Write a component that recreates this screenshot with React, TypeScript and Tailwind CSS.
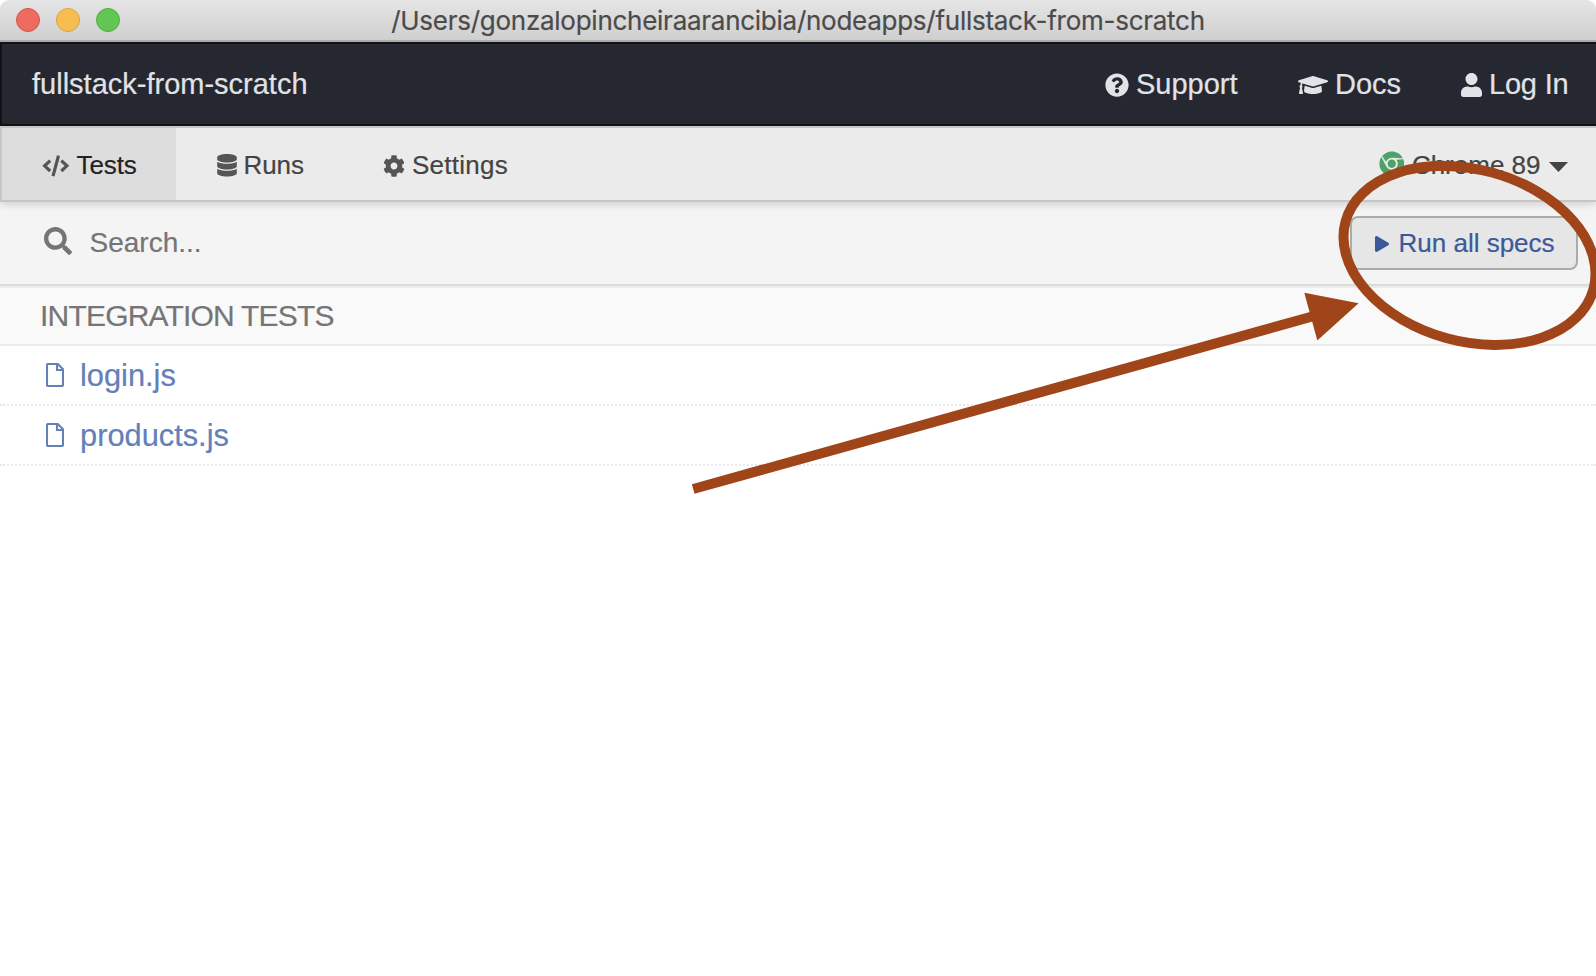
import React from 'react';
import {
  FaChrome,
  FaCog,
  FaDatabase,
  FaGraduationCap,
  FaPlay,
  FaQuestionCircle,
  FaSearch,
  FaUser,
} from 'react-icons/fa';

const specs = ['login.js', 'products.js'];

function FileIcon() {
  return (
    <svg className="mr-4 h-6 w-[18px]" viewBox="0 0 18 24" fill="none" stroke="currentColor" strokeWidth="2.1">
      <path d="M2.2 1h9.6L17 6.2v15.6a1.2 1.2 0 0 1-1.2 1.2H2.2A1.2 1.2 0 0 1 1 21.800V2.200A1.200 1.200 0 0 1 2.200 1z" />
      <path d="M11 1.200v5.800h5.800" />
    </svg>
  );
}

function CodeIcon() {
  return (
    <svg className="h-[22px] w-[27.5px]" viewBox="0 0 27.5 22" fill="none" stroke="#555" strokeWidth="3.2">
      <path d="M8.200 5.600 2.600 10.800l5.600 5.200M19.300 5.600l5.600 5.200-5.600 5.200" />
      <path d="M11 21.200 16.500.6" />
    </svg>
  );
}

function TitleBar() {
  return (
    <div className="relative h-[42px] shrink-0 rounded-t-[9px] border-b-2 border-[#acacac] bg-linear-to-b from-[#e5e5e5] to-[#cfcfcf]">
      <div className="flex h-10 items-center gap-4 pl-4">
        <span className="size-6 rounded-full border border-[#d9544a] bg-[#ed6b60]" />
        <span className="size-6 rounded-full border border-[#dba33f] bg-[#f6be50]" />
        <span className="size-6 rounded-full border border-[#54ab42] bg-[#62c655]" />
      </div>
      <h1 className="absolute inset-0 text-center font-[Inter,sans-serif] text-[26px] leading-[42px] tracking-[-0.265px] whitespace-nowrap text-[#4b4b4b] [-webkit-text-stroke:0.2px]">
        /Users/gonzalopincheiraarancibia/nodeapps/fullstack-from-scratch
      </h1>
    </div>
  );
}

function NavBar() {
  return (
    <nav className="flex h-[84px] shrink-0 items-center border-y-2 border-l-2 border-[#101216] bg-[#252830] pt-px pl-[30px] text-[29px] text-[#e1e3e6] [-webkit-text-stroke:0.2px]">
      <span>fullstack-from-scratch</span>
      <div className="ml-auto flex items-center">
        <a className="flex w-[193px] items-center gap-[7px]">
          <FaQuestionCircle className="size-6" />
          Support
        </a>
        <a className="flex w-[163px] items-center gap-[7px]">
          <FaGraduationCap className="h-6 w-[30px]" />
          Docs
        </a>
        <a className="flex w-[135px] items-center gap-[7px] tracking-[-0.2px] whitespace-nowrap">
          <FaUser className="h-6 w-[21px]" />
          Log In
        </a>
      </div>
    </nav>
  );
}

function Tabs() {
  return (
    <div className="relative z-10 flex h-[76px] shrink-0 items-stretch border-y-2 border-l-2 border-[#c6c6c6] bg-[#ebebeb] text-[26px] text-[#444] shadow-[0_2px_8px_rgba(0,0,0,0.16)] [-webkit-text-stroke:0.2px]">
      <a className="flex w-[174px] items-center gap-[7px] bg-[#dddddd] pt-[3px] pl-10 tracking-[-0.1px] text-[#222]">
        <CodeIcon />
        Tests
      </a>
      <a className="flex w-[167px] items-center gap-[7px] pt-[3px] pl-[40.500px] tracking-[-0.1px]">
        <FaDatabase className="h-[22.4px] w-5 text-[#555]" />
        Runs
      </a>
      <a className="flex items-center gap-[7px] pt-[3px] pl-10 tracking-[0.24px]">
        <FaCog className="size-[22px] text-[#555]" />
        Settings
      </a>
      <a className="ml-auto flex items-center pt-[3px] pr-[28.5px] whitespace-nowrap">
        <FaChrome className="mr-[7px] -mt-[3px] size-[25.5px] text-[#4da267]" />
        Chrome 89
        <svg className="mt-0.5 ml-2 h-2.5 w-[19px]" viewBox="0 0 19 10" fill="#444">
          <path d="M0 0h19L9.5 10z" />
        </svg>
      </a>
    </div>
  );
}

function Toolbar() {
  return (
    <div className="flex h-[84px] shrink-0 items-center border-b-2 border-[#dcdcdc] bg-[#f4f4f4] pr-[18px] pl-11 [-webkit-text-stroke:0.2px]">
      <FaSearch className="mb-[5px] size-7 text-[#757575]" />
      <span className="ml-[17.5px] text-[28px] text-[#757575]">Search...</span>
      <button className="ml-auto flex h-[54px] w-[228px] items-center rounded-[8px] border-2 border-[#ababab] bg-[#e6e6e6] pl-[22.5px] text-[26px] whitespace-nowrap text-[#3b5999]">
        <FaPlay className="mt-0.5 mr-2.5 h-4 w-3.5" />
        Run all specs
      </button>
    </div>
  );
}

function SpecList() {
  return (
    <section className="[-webkit-text-stroke:0.2px]">
      <h2 className="flex h-[60px] items-center border-y-2 border-[#ececec] bg-[#f9f9f9] pb-0.5 pl-10 text-[30px] tracking-[-0.8px] text-[#757575]">
        INTEGRATION TESTS
      </h2>
      <ul className="text-[30.8px]">
        {specs.map((name) => (
          <li
            key={name}
            className="flex h-[60px] items-center border-b-2 border-dotted border-[#e9e9e9] pl-[46px] text-[#6480b9]"
          >
            <FileIcon />
            <span className="pt-0.5">{name}</span>
          </li>
        ))}
      </ul>
    </section>
  );
}

function Annotation() {
  return (
    <svg
      className="pointer-events-none absolute inset-0 z-20 size-full"
      viewBox="0 0 1596 976"
      fill="none"
      stroke="#a0451a"
      strokeWidth="10"
    >
      <ellipse cx="1469.5" cy="255.4" rx="128.5" ry="85.9" transform="rotate(15.3 1469.5 255.4)" />
      <path d="M693.2 489 1314 316" />
      <path d="M1304.3 292.7 1358.6 303.2 1317.3 340.5z" fill="#a0451a" stroke="none" />
    </svg>
  );
}

export default function App() {
  return (
    <div className="relative flex h-[976px] w-[1596px] flex-col overflow-hidden bg-white font-['Liberation_Sans',Arial,sans-serif]">
      <TitleBar />
      <NavBar />
      <Tabs />
      <Toolbar />
      <SpecList />
      <Annotation />
    </div>
  );
}
